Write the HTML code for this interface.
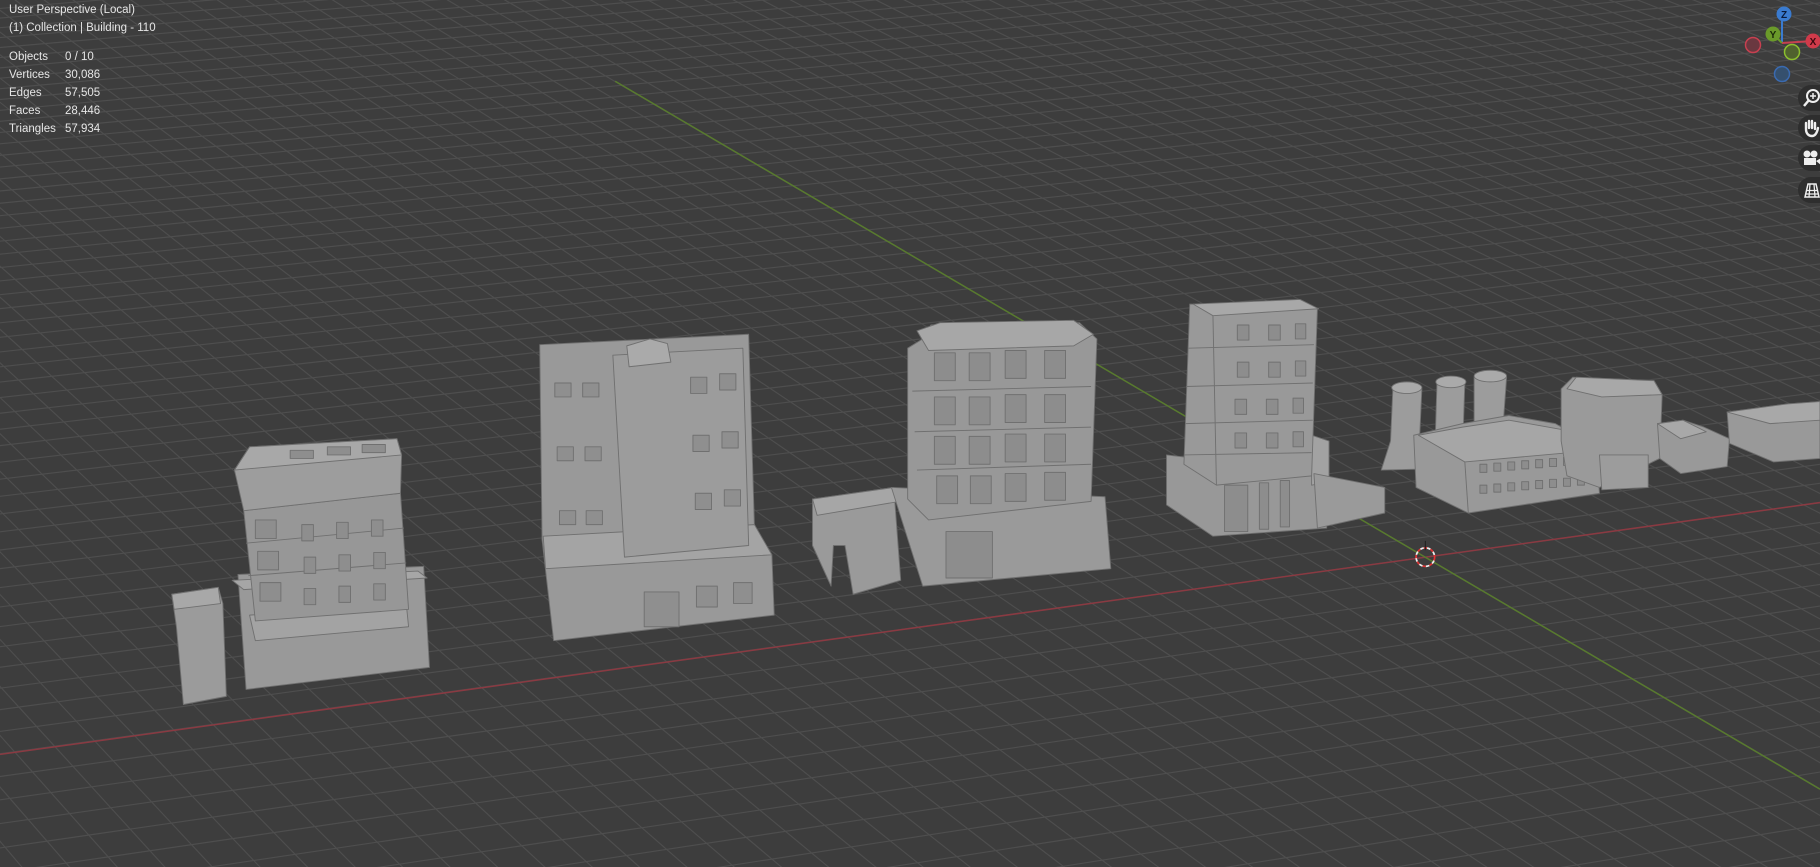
<!DOCTYPE html>
<html><head><meta charset="utf-8"><style>
html,body{margin:0;padding:0;background:#3d3d3d;width:1820px;height:867px;overflow:hidden;font-family:"Liberation Sans",sans-serif}
#v{position:absolute;left:0;top:0}
.t{position:absolute;left:9px;color:#e6e6e6;font-size:11.5px;line-height:18px;white-space:pre}
.s span{display:inline-block;width:56px}
.ic{position:absolute;left:1798px;width:22px;height:26px;border-radius:13px 0 0 13px;background:#2e2e2e;overflow:hidden}
</style></head><body>
<svg id="v" width="1820" height="867" viewBox="0 0 1568 747" preserveAspectRatio="none">
<rect width="1568" height="747" fill="#3d3d3d"/>
<g id="grid"></g>
<line x1="0" y1="650" x2="1568" y2="433" stroke="#8a3a42" stroke-width="1.3"/>
<line x1="530" y1="70" x2="1568" y2="680" stroke="#587a2e" stroke-width="1.3"/>
<g stroke="#707070" stroke-width="0.8" stroke-linejoin="round">
<!-- B1 -->
<polygon points="205,495 365,488 370,575 212,594" fill="#999"/>
<polygon points="200,500 360,492 368,498 210,508" fill="#a6a6a6"/>
<polygon points="148,512 188,506 192,520 195,600 158,607 152,540" fill="#9b9b9b"/>
<polygon points="148,512 188,506 190,520 150,525" fill="#a8a8a8"/>
<polygon points="215,530 350,520 352,540 220,552" fill="#a3a3a3"/>
<polygon points="210,440 345,425 352,525 220,535" fill="#979797"/>
<line x1="212" y1="468" x2="348" y2="455"/><line x1="214" y1="496" x2="350" y2="485"/>
<polygon points="202,405 215,385 342,378 346,392 345,425 210,440" fill="#9d9d9d"/>
<polygon points="202,405 215,385 342,378 346,392" fill="#a8a8a8"/>
<g fill="#8e8e8e"><rect x="220" y="448" width="18" height="16"/><rect x="222" y="475" width="18" height="16"/><rect x="224" y="502" width="18" height="16"/>
<rect x="260" y="452" width="10" height="14"/><rect x="290" y="450" width="10" height="14"/><rect x="320" y="448" width="10" height="14"/>
<rect x="262" y="480" width="10" height="14"/><rect x="292" y="478" width="10" height="14"/><rect x="322" y="476" width="10" height="14"/>
<rect x="262" y="507" width="10" height="14"/><rect x="292" y="505" width="10" height="14"/><rect x="322" y="503" width="10" height="14"/>
<rect x="250" y="388" width="20" height="7"/><rect x="282" y="385" width="20" height="7"/><rect x="312" y="383" width="20" height="7"/></g>
<!-- B2 -->
<polygon points="465,297 645,288 650,455 665,478 667,530 477,552 467,465" fill="#999"/>
<polygon points="468,462 650,452 665,478 470,490" fill="#a4a4a4"/>
<polygon points="528,306 640,300 645,470 538,480" fill="#9c9c9c"/>
<polygon points="540,298 560,292 575,296 578,312 542,316" fill="#aaa"/>
<g fill="#8f8f8f"><rect x="478" y="330" width="14" height="12"/><rect x="502" y="330" width="14" height="12"/><rect x="480" y="385" width="14" height="12"/><rect x="504" y="385" width="14" height="12"/><rect x="482" y="440" width="14" height="12"/><rect x="505" y="440" width="14" height="12"/>
<rect x="595" y="325" width="14" height="14"/><rect x="620" y="322" width="14" height="14"/><rect x="597" y="375" width="14" height="14"/><rect x="622" y="372" width="14" height="14"/><rect x="599" y="425" width="14" height="14"/><rect x="624" y="422" width="14" height="14"/>
<rect x="555" y="510" width="30" height="30"/><rect x="600" y="505" width="18" height="18"/><rect x="632" y="502" width="16" height="18"/></g>
<!-- B3 -->
<polygon points="700,430 770,420 776,500 735,512 728,470 718,470 716,505 700,470" fill="#9a9a9a"/>
<polygon points="700,430 770,420 775,432 704,444" fill="#a6a6a6"/>
<polygon points="768,420 952,428 957,490 795,505" fill="#9a9a9a"/>
<polygon points="795,292 802,280 930,278 945,292 940,432 800,448 782,430 782,300" fill="#989898"/>
<polygon points="790,285 810,278 925,276 942,288 925,298 800,302" fill="#a7a7a7"/>
<line x1="786" y1="337" x2="940" y2="333"/><line x1="788" y1="372" x2="940" y2="368"/><line x1="790" y1="405" x2="940" y2="400"/>
<g fill="#8d8d8d"><rect x="805" y="304" width="18" height="24"/><rect x="835" y="304" width="18" height="24"/><rect x="866" y="302" width="18" height="24"/><rect x="900" y="302" width="18" height="24"/>
<rect x="805" y="342" width="18" height="24"/><rect x="835" y="342" width="18" height="24"/><rect x="866" y="340" width="18" height="24"/><rect x="900" y="340" width="18" height="24"/>
<rect x="805" y="376" width="18" height="24"/><rect x="835" y="376" width="18" height="24"/><rect x="866" y="374" width="18" height="24"/><rect x="900" y="374" width="18" height="24"/>
<rect x="807" y="410" width="18" height="24"/><rect x="836" y="410" width="18" height="24"/><rect x="866" y="408" width="18" height="24"/><rect x="900" y="407" width="18" height="24"/>
<rect x="815" y="458" width="40" height="40"/></g>
<!-- B4 -->
<polygon points="1005,392 1140,408 1143,455 1045,462 1005,435" fill="#989898"/>
<polygon points="1130,375 1145,380 1145,415 1130,418" fill="#a2a2a2"/>
<polygon points="1132,408 1193,420 1193,442 1135,455" fill="#9a9a9a"/>
<polygon points="1025,262 1135,266 1130,410 1048,418 1020,400" fill="#999"/>
<polygon points="1028,262 1120,258 1136,266 1045,272" fill="#a8a8a8"/>
<line x1="1045" y1="272" x2="1048" y2="418"/>
<line x1="1024" y1="300" x2="1132" y2="297"/><line x1="1022" y1="333" x2="1131" y2="330"/><line x1="1021" y1="365" x2="1131" y2="362"/><line x1="1020" y1="392" x2="1130" y2="390"/>
<g fill="#8d8d8d"><rect x="1066" y="280" width="10" height="13"/><rect x="1093" y="280" width="10" height="13"/><rect x="1116" y="279" width="9" height="13"/>
<rect x="1066" y="312" width="10" height="13"/><rect x="1093" y="312" width="10" height="13"/><rect x="1116" y="311" width="9" height="13"/>
<rect x="1064" y="344" width="10" height="13"/><rect x="1091" y="344" width="10" height="13"/><rect x="1114" y="343" width="9" height="13"/>
<rect x="1064" y="373" width="10" height="13"/><rect x="1091" y="373" width="10" height="13"/><rect x="1114" y="372" width="9" height="13"/>
<rect x="1055" y="418" width="20" height="40"/><rect x="1085" y="416" width="8" height="40"/><rect x="1103" y="414" width="8" height="40"/></g>
<!-- B5 factory -->
<polygon points="1200,335 1225,335 1222,400 1232,404 1190,405 1198,380" fill="#9c9c9c"/>
<polygon points="1238,330 1262,330 1260,390 1236,395" fill="#9c9c9c"/>
<polygon points="1270,325 1298,325 1294,380 1270,385" fill="#9c9c9c"/>
<ellipse cx="1212" cy="334" rx="13" ry="5" fill="#aaa"/><ellipse cx="1250" cy="329" rx="13" ry="5" fill="#aaa"/><ellipse cx="1284" cy="324" rx="14" ry="5" fill="#aaa"/>
<polygon points="1218,375 1260,365 1300,358 1340,365 1375,385 1378,425 1265,442 1220,420" fill="#999"/>
<polygon points="1222,375 1260,368 1300,362 1345,370 1375,388 1262,398" fill="#a6a6a6"/>
<line x1="1262" y1="398" x2="1265" y2="442"/>
<g fill="#8d8d8d"><rect x="1275" y="400" width="6" height="7"/><rect x="1287" y="399" width="6" height="7"/><rect x="1299" y="398" width="6" height="7"/><rect x="1311" y="397" width="6" height="7"/><rect x="1323" y="396" width="6" height="7"/><rect x="1335" y="395" width="6" height="7"/><rect x="1347" y="394" width="6" height="7"/><rect x="1359" y="393" width="6" height="7"/>
<rect x="1275" y="418" width="6" height="7"/><rect x="1287" y="417" width="6" height="7"/><rect x="1299" y="416" width="6" height="7"/><rect x="1311" y="415" width="6" height="7"/><rect x="1323" y="414" width="6" height="7"/><rect x="1335" y="413" width="6" height="7"/><rect x="1347" y="412" width="6" height="7"/><rect x="1359" y="411" width="6" height="7"/></g>
<!-- B6 -->
<polygon points="1345,335 1355,325 1425,328 1432,340 1430,395 1378,420 1350,410 1345,380" fill="#9a9a9a"/>
<polygon points="1350,335 1358,325 1425,328 1432,340 1380,342" fill="#a8a8a8"/>
<polygon points="1378,392 1420,392 1420,420 1380,422" fill="#9c9c9c"/>
<!-- B7 -->
<polygon points="1428,365 1450,362 1468,368 1490,378 1488,402 1448,408 1430,395" fill="#999"/>
<polygon points="1428,365 1450,362 1470,372 1448,378" fill="#a8a8a8"/>
<!-- B8 -->
<polygon points="1488,355 1540,348 1568,346 1568,395 1528,398 1490,382" fill="#999"/>
<polygon points="1488,355 1540,348 1568,346 1568,362 1525,365" fill="#a8a8a8"/>
</g>
<circle cx="1228" cy="480" r="8" fill="none" stroke="#d33" stroke-width="1.5" stroke-dasharray="3 3"/>
<circle cx="1228" cy="480" r="8" fill="none" stroke="#eee" stroke-width="1.5" stroke-dasharray="3 3" stroke-dashoffset="3"/>
<line x1="1228" y1="466" x2="1228" y2="474" stroke="#222"/>
</svg>
<svg style="position:absolute;left:1740px;top:0" width="80" height="90">
<line x1="42" y1="43" x2="42" y2="14" stroke="#3a7bd0" stroke-width="2"/>
<line x1="42" y1="43" x2="73" y2="41" stroke="#c84050" stroke-width="2"/>
<line x1="42" y1="43" x2="33" y2="34" stroke="#6a9a2a" stroke-width="2"/>
<circle cx="13" cy="45" r="7.5" fill="#6a3840" stroke="#c84050" stroke-width="1.5"/>
<circle cx="42" cy="74" r="7.5" fill="#35506e" stroke="#3a6ab0" stroke-width="1.5"/>
<circle cx="52" cy="52" r="7.5" fill="#50622e" stroke="#8cbf2e" stroke-width="1.5"/>
<circle cx="33" cy="34" r="7.5" fill="#6a9a2a"/><text x="33" y="38" font-size="10" font-weight="bold" text-anchor="middle" fill="#1a2a0a" font-family="Liberation Sans">Y</text>
<circle cx="44" cy="14" r="7.5" fill="#3a7bd0"/><text x="44" y="18" font-size="10" font-weight="bold" text-anchor="middle" fill="#0a1a3a" font-family="Liberation Sans">Z</text>
<circle cx="73" cy="41" r="7.5" fill="#d03a4a"/><text x="73" y="45" font-size="10" font-weight="bold" text-anchor="middle" fill="#3a0a10" font-family="Liberation Sans">X</text>
</svg>
<div class="ic" style="top:85px"><svg width="26" height="26"><circle cx="15" cy="11" r="6" fill="none" stroke="#eee" stroke-width="2"/><line x1="11" y1="15" x2="6" y2="21" stroke="#eee" stroke-width="2.5"/><path d="M15 8v6M12 11h6" stroke="#eee" stroke-width="1.5"/></svg></div>
<div class="ic" style="top:115px"><svg width="26" height="26"><path d="M8 14V8M11 13V6M14 13V6M17 14V8M8 14c0 5 3 7 6 7s5-3 6-8" stroke="#eee" stroke-width="2.4" fill="none" stroke-linecap="round"/></svg></div>
<div class="ic" style="top:145px"><svg width="26" height="26"><circle cx="9" cy="9" r="3.5" fill="#eee"/><circle cx="16" cy="9" r="3.5" fill="#eee"/><rect x="6" y="13" width="12" height="7" fill="#eee"/><path d="M18 16l5-3v7z" fill="#eee"/></svg></div>
<div class="ic" style="top:177px"><svg width="26" height="26"><path d="M7 20L10 7h8l3 13z" fill="none" stroke="#eee" stroke-width="1.5"/><path d="M8.5 13.5h11M8 17h12M12 7l-1 13M16 7l1 13" stroke="#eee" stroke-width="1.3"/></svg></div>
<div class="t" style="top:1px">User Perspective (Local)</div>
<div class="t" style="top:19px">(1) Collection | Building - 110</div>
<div class="t s" style="top:48px"><span>Objects</span>0 / 10</div>
<div class="t s" style="top:66px"><span>Vertices</span>30,086</div>
<div class="t s" style="top:84px"><span>Edges</span>57,505</div>
<div class="t s" style="top:102px"><span>Faces</span>28,446</div>
<div class="t s" style="top:120px"><span>Triangles</span>57,934</div>
<script>
(function(){
var O=[1228,480],A=[-1634,-1200],B=[12000,-1006],wb=0.0026,wa=0.0084;
function P(u,v){var d=wb*u+wa*v+1;return [(wb*u*B[0]+wa*v*A[0]+O[0])/d,(wb*u*B[1]+wa*v*A[1]+O[1])/d,d];}
var g=document.getElementById('grid'),s='';
function seg(p,q){var dd=(p[2]+q[2])/2;var op=Math.max(0,Math.min(1,1.5-dd*0.25));if(op<0.05)return '';
return '<line x1="'+p[0].toFixed(1)+'" y1="'+p[1].toFixed(1)+'" x2="'+q[0].toFixed(1)+'" y2="'+q[1].toFixed(1)+'" stroke="#4e4e4e" stroke-opacity="'+op.toFixed(2)+'"/>';}
var N=500,step=10;
for(var i=-N;i<=N;i++){
 for(var j=-N;j<N;j+=step){
  var a=P(i,j),b=P(i,j+step);if(a[2]>0.05&&b[2]>0.05)s+=seg(a,b);
  a=P(j,i);b=P(j+step,i);if(a[2]>0.05&&b[2]>0.05)s+=seg(a,b);
 }
}
g.innerHTML=s;
})();
</script>
</body></html>
